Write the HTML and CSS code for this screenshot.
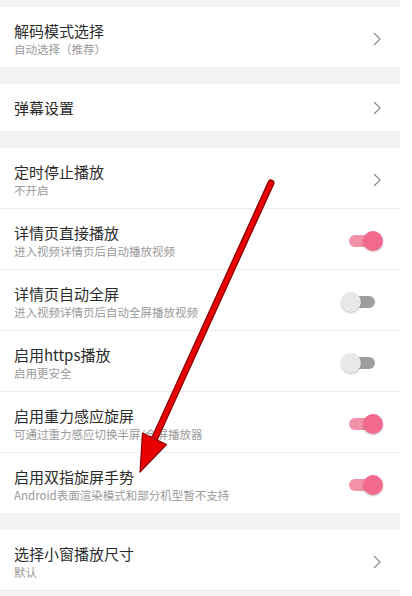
FILE: index.html
```html
<!DOCTYPE html>
<html lang="zh-CN">
<head>
  <meta charset="UTF-8">
  <meta name="viewport" content="width=device-width, initial-scale=1.0">
  <title>播放设置</title>
  <link rel="stylesheet" href="styles.css">
</head>
<body>
  <div class="page">
    <div class="group">
      <div class="row">
        <div class="text">
          <div class="title">解码模式选择</div>
          <div class="sub">自动选择（推荐）</div>
        </div>
        <svg class="chevron" viewBox="0 0 8 14"><path d="M1 1 L7 7 L1 13"/></svg>
      </div>
    </div>

    <div class="group">
      <div class="row single">
        <div class="text">
          <div class="title">弹幕设置</div>
        </div>
        <svg class="chevron" viewBox="0 0 8 14"><path d="M1 1 L7 7 L1 13"/></svg>
      </div>
    </div>

    <div class="group">
      <div class="row">
        <div class="text">
          <div class="title">定时停止播放</div>
          <div class="sub">不开启</div>
        </div>
        <svg class="chevron" viewBox="0 0 8 14"><path d="M1 1 L7 7 L1 13"/></svg>
      </div>
      <div class="row">
        <div class="text">
          <div class="title">详情页直接播放</div>
          <div class="sub">进入视频详情页后自动播放视频</div>
        </div>
        <div class="switch on"><span class="track"></span><span class="thumb"></span></div>
      </div>
      <div class="row">
        <div class="text">
          <div class="title">详情页自动全屏</div>
          <div class="sub">进入视频详情页后自动全屏播放视频</div>
        </div>
        <div class="switch"><span class="track"></span><span class="thumb"></span></div>
      </div>
      <div class="row">
        <div class="text">
          <div class="title">启用https播放</div>
          <div class="sub">启用更安全</div>
        </div>
        <div class="switch"><span class="track"></span><span class="thumb"></span></div>
      </div>
      <div class="row">
        <div class="text">
          <div class="title">启用重力感应旋屏</div>
          <div class="sub">可通过重力感应切换半屏/全屏播放器</div>
        </div>
        <div class="switch on"><span class="track"></span><span class="thumb"></span></div>
      </div>
      <div class="row">
        <div class="text">
          <div class="title">启用双指旋屏手势</div>
          <div class="sub">Android表面渲染模式和部分机型暂不支持</div>
        </div>
        <div class="switch on"><span class="track"></span><span class="thumb"></span></div>
      </div>
    </div>

    <div class="group">
      <div class="row last">
        <div class="text">
          <div class="title">选择小窗播放尺寸</div>
          <div class="sub">默认</div>
        </div>
        <svg class="chevron" viewBox="0 0 8 14"><path d="M1 1 L7 7 L1 13"/></svg>
      </div>
    </div>

    <!-- red annotation arrow drawn over the list -->
    <svg class="arrow" viewBox="0 0 400 596" width="400" height="596">
      <line x1="271" y1="183" x2="153" y2="442" stroke="#8a0000" stroke-width="7" stroke-linecap="round"/>
      <line x1="271" y1="183" x2="153" y2="442" stroke="#e80000" stroke-width="4.5" stroke-linecap="round"/>
      <path d="M140 472 L142.5 433 L166.5 444.5 Z" fill="#e80000" stroke="#8a0000" stroke-width="1.2" stroke-linejoin="round"/>
    </svg>
  </div>
</body>
</html>
```

FILE: styles.css
```css
body {
  margin: 0;
  background-color: #ffffff;
  font-family: "Noto Sans CJK SC", "Noto Sans", sans-serif;
}
.page {
  position: relative;
  width: 400px;
  height: 596px;
  overflow: hidden;
  background-color: #f3f3f3;
  padding-top: 7px;
  box-sizing: border-box;
}
.group {
  background-color: #ffffff;
  margin-bottom: 17px;
}
.row {
  display: flex;
  align-items: center;
  justify-content: space-between;
  padding: 14px 17px 10px 14px;
  position: relative;
}
.row + .row {
  border-top: 1px solid #ececec;
}
.row.single {
  padding-top: 14px;
  padding-bottom: 13px;
}
.row.last {
  border-bottom: 1px solid #ececec;
}
.title {
  font-size: 15px;
  line-height: 20px;
  color: #2b2b2b;
}
.sub {
  font-size: 11.5px;
  line-height: 16px;
  color: #9a9a9a;
}
.chevron {
  width: 8px;
  height: 14px;
  margin-right: 2px;
  fill: none;
  stroke: #8c8c8c;
  stroke-width: 1.2;
}
.switch {
  position: relative;
  width: 42px;
  height: 20px;
}
.switch .track {
  position: absolute;
  left: 9px;
  top: 4px;
  width: 25px;
  height: 12px;
  border-radius: 6px;
  background-color: #9e9e9e;
}
.switch .thumb {
  position: absolute;
  left: 0;
  top: 0;
  width: 20px;
  height: 20px;
  border-radius: 50%;
  background-color: #e8e8e8;
  box-shadow: 0 1px 2px rgba(0, 0, 0, 0.25);
}
.switch.on .track {
  left: 8px;
  background-color: #f391a8;
}
.switch.on .thumb {
  left: 22px;
  background-color: #f2698e;
}
.arrow {
  position: absolute;
  left: 0;
  top: 0;
  pointer-events: none;
}
```
